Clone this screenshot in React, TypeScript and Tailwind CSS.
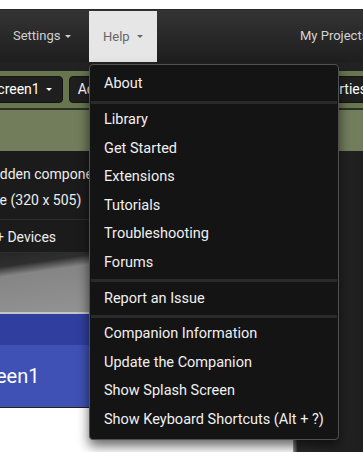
import React from "react";

function Caret() {
  return (
    <span className="inline-block w-0 h-0 border-l-[3px] border-r-[3px] border-t-[3px] border-l-transparent border-r-transparent border-t-current" />
  );
}

function Item({ label }: { label: string }) {
  return (
    <div className="h-[28.6px] flex items-center px-[14px] text-[14.5px] text-[#f0f0f0] whitespace-nowrap">
      {label}
    </div>
  );
}

function Sep() {
  return <div className="my-[2px] mx-[1px] h-[3px] bg-[#2a2a2a]" />;
}

export default function App() {
  return (
    <div className="relative w-[363px] h-[452px] overflow-hidden bg-white font-['Roboto',_sans-serif]">
      <div className="h-[9px] bg-white" />
      <div className="h-[1px] bg-[#2a2a2a]" />
      <header className="h-[52px] flex items-stretch bg-gradient-to-b from-[#343434] to-[#1e1e1e] text-[13px] whitespace-nowrap">
        <div className="ml-[-1px] w-[90px] shrink-0 flex items-center gap-[5px] pl-[14px] text-[#d0d0d0]">
          Settings <Caret />
        </div>
        <div className="mt-[1px] w-[68px] shrink-0 flex items-center gap-[7px] pl-[14px] bg-[#e6e6e6] text-[#666]">
          Help <Caret />
        </div>
        <div className="ml-[143px] shrink-0 flex items-center text-[#d4d4d4]">My Projects</div>
      </header>

      <div className="h-[46px] flex flex-col bg-[#687650]">
        <div className="h-[9px] bg-[#222]" />
        <div className="h-[37px] flex items-center text-[14px] text-white whitespace-nowrap">
          <div className="ml-[-22px] h-[27px] shrink-0 flex items-center gap-[6px] pl-[10px] pr-[10px] rounded-[4px] bg-[#1f1f1f] border border-[#151515]">
            Screen1 <Caret />
          </div>
          <div className="ml-[6px] w-[100px] h-[27px] shrink-0 flex items-center pl-[8px] rounded-[4px] bg-[#1f1f1f] border border-[#151515] overflow-hidden">
            Add Screen ...
          </div>
          <div className="ml-auto mr-[-15px] h-[27px] shrink-0 flex items-center pl-[10px] pr-[10px] rounded-[4px] bg-[#1f1f1f] border border-[#151515]">
            Properties
          </div>
        </div>
      </div>
      <div className="h-[2px] bg-[#2c3124]" />
      <div className="h-[41px] bg-[#727d5b]" />

      <div className="flex h-[301px]">
        <div className="w-[293px] shrink-0 flex flex-col">
          <div className="bg-[#1b1b1b] text-[14px] text-[#eeeeee] whitespace-nowrap leading-[20px]">
            <div className="h-[36px] pt-[13px]">
              <span className="ml-[-60px]">Display hidden components in Viewer</span>
            </div>
            <div className="h-[33px] pt-[3px] border-b border-[#2e2e2e]">
              <span className="ml-[-61px]">Phone size (320 x 505)</span>
            </div>
            <div className="h-[33px] pt-[7px] border-b border-[#2e2e2e]">
              <span className="ml-[-64px]">Android 5+ Devices</span>
            </div>
          </div>
          <div className="h-[59px] bg-[linear-gradient(172deg,#262626_0%,#2f2f2f_14%,#858585_24%,#9b9b9b_100%)]" />
          <div className="h-[2px] bg-[#c5c5c5]" />
          <div className="h-[31px] bg-[#303f9f]" />
          <div className="h-[62px] bg-[#3f51b5] flex items-center text-white text-[20px] whitespace-nowrap">
            <span className="ml-[-33px]">Screen1</span>
          </div>
          <div className="h-[1px] bg-[#222]" />
          <div className="flex-1 bg-white" />
        </div>
        <div className="w-[4px] shrink-0 bg-gradient-to-r from-[#9a9a9a] to-[#3a3a3a]" />
        <div className="flex-1 bg-gradient-to-r from-[#2a2a2a] to-[#1e1e1e]" />
      </div>

      <div className="absolute left-[89px] top-[64px] w-[250px] rounded-[4px] border border-[#505050] bg-[#141414] py-[5px] shadow-[0_6px_12px_rgba(0,0,0,0.6)]">
        <Item label="About" />
        <Sep />
        <Item label="Library" />
        <Item label="Get Started" />
        <Item label="Extensions" />
        <Item label="Tutorials" />
        <Item label="Troubleshooting" />
        <Item label="Forums" />
        <Sep />
        <Item label="Report an Issue" />
        <Sep />
        <Item label="Companion Information" />
        <Item label="Update the Companion" />
        <Item label="Show Splash Screen" />
        <Item label="Show Keyboard Shortcuts (Alt + ?)" />
      </div>
    </div>
  );
}
